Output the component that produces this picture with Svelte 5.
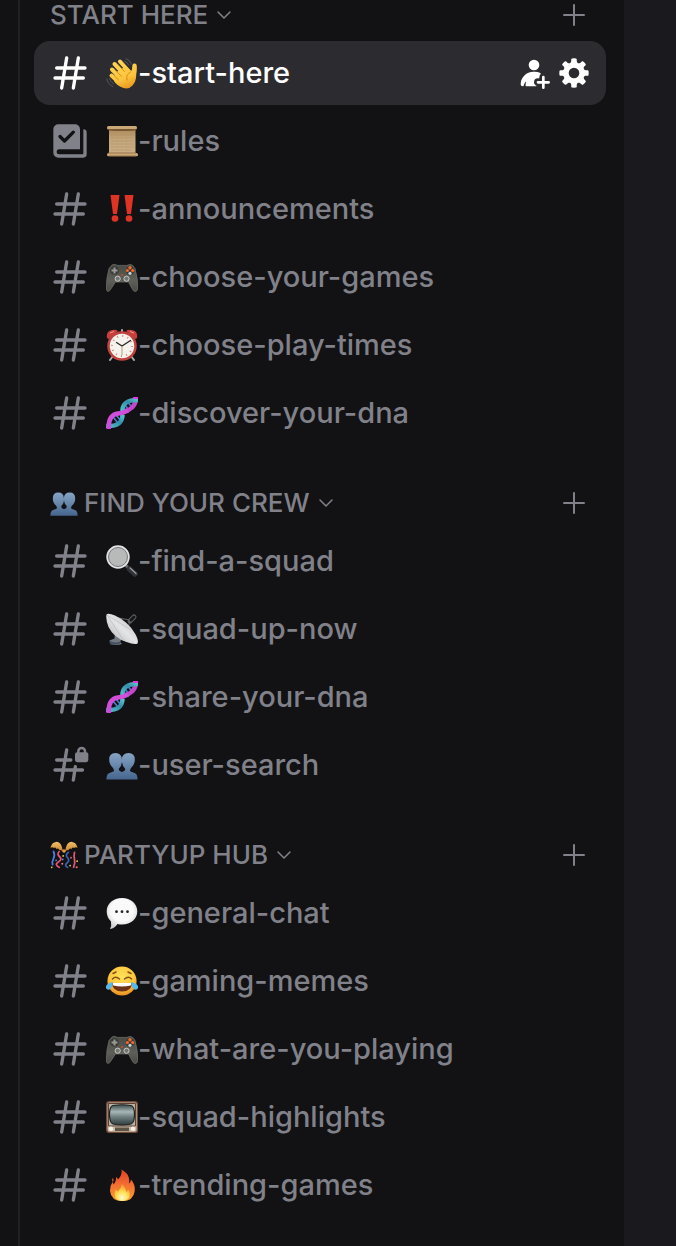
<script lang="ts">
  type Kind = 'text' | 'rules' | 'locked'
  type Channel = { name: string; emoji: string; kind?: Kind }
  type Category = { name: string; emoji?: string; channels: Channel[] }

  const categories: Category[] = [
    {
      name: 'START HERE',
      channels: [
        { name: 'start-here', emoji: 'wave' },
        { name: 'rules', emoji: 'scroll', kind: 'rules' },
        { name: 'announcements', emoji: 'bangbang' },
        { name: 'choose-your-games', emoji: 'gamepad' },
        { name: 'choose-play-times', emoji: 'clock' },
        { name: 'discover-your-dna', emoji: 'dna' },
      ],
    },
    {
      name: 'FIND YOUR CREW',
      emoji: 'busts',
      channels: [
        { name: 'find-a-squad', emoji: 'magnifier' },
        { name: 'squad-up-now', emoji: 'satellite' },
        { name: 'share-your-dna', emoji: 'dna' },
        { name: 'user-search', emoji: 'busts', kind: 'locked' },
      ],
    },
    {
      name: 'PARTYUP HUB',
      emoji: 'confetti',
      channels: [
        { name: 'general-chat', emoji: 'speech' },
        { name: 'gaming-memes', emoji: 'joy' },
        { name: 'what-are-you-playing', emoji: 'gamepad' },
        { name: 'squad-highlights', emoji: 'tv' },
        { name: 'trending-games', emoji: 'fire' },
      ],
    },
  ]

  let selected = $state('start-here')
  let collapsed = $state<Record<string, boolean>>({})
</script>

{#snippet emojiIcon(name: string)}
  <svg class="emoji" viewBox="0 0 32 32" role="img" aria-label={name}>
    {#if name === 'wave'}
      <g fill="none" stroke="#55555a" stroke-width="1" stroke-linecap="round">
        <path d="M20 1.500q4 1.500 5.500 5.500M18.500 4q3 1.200 4.200 4M.8 22q.8 5 5.700 7.500M3.500 21.500q.7 3.500 4 5.300" />
      </g>
      <g fill="none" stroke="url(#skin)" stroke-linecap="round">
        <path d="M6 12.500l10 10M8.500 7l11 11.500M14 4.500l9 10M5.500 18.500l8 7.500" stroke-width="4" />
      </g>
      <path fill="url(#skin)" d="M9 16L20 9l5 5q1.300-1 1.200-4 0-3.200 2-3.500 2.600-.2 2.600 3 .2 4-.5 7.500-.2 8-3.800 11.500-3.500 4-9 2.500Q11 29 8 24z" />
      <path fill="none" stroke="#c98316" stroke-width=".8" stroke-linecap="round" d="M9 12.800l6.500 6.500M12 7.500l6.500 7M8.500 19l4 3.800M24.500 15q-5 2.500-3.500 8" />
    {:else if name === 'scroll'}
      <path fill="url(#paper)" d="M3 3h26.500v26H3z" />
      <path stroke="#a58a60" stroke-width=".5" stroke-dasharray="3 .7 5 .6" d="M5 10h23M5 13h23M5 16h23M5 19h23M5 22h23M5 25h20" />
      <rect x="1" y="1" width="30" height="3.500" rx="1.500" fill="#cba878" />
      <path fill="#765834" d="M2 4h28v1.500q-14 1-27 0z" />
      <rect x="1" y="28" width="31" height="3.200" rx="1.500" fill="#cba878" />
      <path stroke="#8b683d" stroke-width=".8" d="M2 28h28M3 31h27" />
    {:else if name === 'bangbang'}
      <g fill="#df3423">
        <path d="M4.500 2h9l-2.500 19H7zM18.500 2h9L25 21h-4z" />
        <circle cx="9" cy="25.500" r="3.300" />
        <circle cx="23" cy="25.500" r="3.300" />
      </g>
    {:else if name === 'gamepad'}
      <path fill="url(#pad)" stroke="#74746c" stroke-width=".7" d="M6 4q3-1.500 5 .4h10Q24 2.500 26.800 4.500l2.200 3q3 11 2.700 19.500-.3 3.700-2.700 3.500-1.500 0-3-3l-3.500-6.500h-13L5.500 27q-2 3.500-3.500 3.500Q.3 30.300.3 27 .3 17 3 7.500z" />
      <circle cx="8.500" cy="9.500" r="4.300" fill="#393936" />
      <path stroke="#9b9b94" stroke-width="2" d="M8.500 6.500v6M5.500 9.500h6" />
      <circle cx="24" cy="9.500" r="4.300" fill="#393936" />
      <g fill="#f26a2b"><circle cx="24" cy="6.800" r="1.700" /><circle cx="21.400" cy="9.500" r="1.600" /><circle cx="26.700" cy="9.500" r="1.600" /></g>
      <circle cx="24" cy="12.300" r="1.600" fill="#c9d2d6" />
      <circle cx="16" cy="14" r="1.100" fill="#cc5120" />
      <g fill="#747672" stroke="#c5c9c8" stroke-width="1"><circle cx="11.700" cy="17.700" r="2.600" /><circle cx="20.500" cy="17.700" r="2.600" /></g>
    {:else if name === 'clock'}
      <path stroke="#aaa" stroke-width="2" stroke-linecap="round" d="M7 27l-3 4M25 27l3 4M16 3V1" />
      <path fill="#c93e3c" d="M1 9Q0 3 4.500 1.500 9-.3 12 2L2.500 10zM31 9q1-6-3.500-7.500Q23-.3 20 2l9.500 8z" />
      <path stroke="#ee9b94" d="M4 4l4-1.500M28 4l-4-1.500" />
      <circle cx="16" cy="17" r="13.500" fill="#f5f3ee" stroke="#c24441" stroke-width="2.500" />
      <circle cx="16" cy="17" r="10" fill="none" stroke="#d58277" stroke-width="2" stroke-dasharray="1 4.236" />
      <path fill="none" stroke="#282828" stroke-width="1.300" stroke-linecap="round" d="M10.500 13.500L16 17l8.500-5.500" />
      <path stroke="#bd9d71" d="M16 17v9" />
    {:else if name === 'dna'}
      <path fill="none" stroke="#4a7fd0" stroke-width="1.600" d="M19 8l4 5M22.500 6l4 5M7 20l5 6M10.500 18.500l4 5" />
      <path fill="none" stroke="#c247cd" stroke-width="4.500" d="M30 0q0 7-4 10.500-3 3-7 3.500" />
      <path fill="none" stroke="url(#helix)" stroke-width="4.500" d="M16.500 14Q16 3 31.800 3" />
      <path fill="none" stroke="url(#helix)" stroke-width="4.500" d="M.2 29q16 1 16.300-11" />
      <path fill="none" stroke="#cf4fd9" stroke-width="4.500" d="M2.800 31.500Q2 18 12 16.500q5-.3 10-3" />
      <path fill="none" stroke="#e03ae6" stroke-width="2" d="M27 1h5M1 31h4" />
    {:else if name === 'busts'}
      <path fill="url(#bust)" d="M.5 30.500q-.3-5 3-6.500l4-1.500q1-1.500-.5-3.500-3.800-3-3.800-8.500Q3.200 4 9.500 4t6.300 6.500Q16.200 4 22.500 4t6.300 6.500q0 5.500-3.800 8.500-1.500 2-.5 3.500l4 1.500q3.300 1.500 3 6.500z" />
      <path fill="#121214" d="M16 11.500q.2 5-3 8-.5 1.200.5 2.200 1.200 1 2.500 1.300 1.300-.3 2.500-1.300 1-1 .5-2.200-3.200-3-3-8z" />
    {:else if name === 'magnifier'}
      <path stroke="#68696c" stroke-width="3" d="M19.500 20l4 4" />
      <path stroke="#303136" stroke-width="5.500" stroke-linecap="round" d="M23.500 24l5.500 5" />
      <path stroke="#9c9ea2" stroke-width="1.200" stroke-linecap="round" d="M24 23l6 5.500" />
      <circle cx="12" cy="12" r="10.700" fill="#b8b9b9" stroke="#e1e2e3" stroke-width="2" />
      <circle cx="12" cy="12" r="9.500" fill="none" stroke="#777a7d" stroke-width="1" />
    {:else if name === 'satellite'}
      <path fill="#737980" d="M9 17l8 6-3 6 2 2q-6 2-12 0l-.5-3.500 5-2z" />
      <path fill="#414f62" d="M4 28q6 3 11 0v2q-5 3-11 1z" />
      <path stroke="#777" stroke-width=".8" d="M7 4l17 3-4 18" fill="none" />
      <path fill="url(#dish)" d="M.5 1.500Q2-.5 9 2.500q13 6 20 18 4 7 2.500 10-3 1.500-11-1.500Q8 25 2.500 14-.5 6 .5 1.500z" />
      <path fill="none" stroke="#b3b5b8" stroke-width=".6" d="M1 2l24 15M1 2l17 26" />
      <path stroke="#5c5e62" stroke-width="5" stroke-linecap="round" d="M24 8l4-4" />
      <path stroke="#17181b" stroke-width="3" stroke-linecap="round" d="M25 7l3-3" />
    {:else if name === 'confetti'}
      <g fill="none" stroke-width="2" stroke-linecap="round">
        <path stroke="#4a7fe0" d="M4 12q2 4 0 8t-1 7" />
        <path stroke="#e75772" d="M10.500 12q-3 3 .5 6t-1.500 6 1 6M28 13q-1 4 0 8t-1 9" />
        <path stroke="#3964b0" d="M21 13q-4 3-1 6t-.5 6 .5 5" />
      </g>
      <g fill="#e9ce51"><circle cx="15" cy="17" r="1" /><circle cx="31" cy="23" r="1" /><circle cx="2" cy="30" r="1" /><circle cx="23" cy="28" r="1" /></g>
      <g fill="#ef7181"><circle cx="14" cy="26" r="1.200" /><circle cx="30.500" cy="30" r="1.200" /><circle cx="24" cy="19" r="1" /></g>
      <g fill="#5b8fe8"><circle cx="7" cy="22" r="1" /><circle cx="14.500" cy="21" r="1" /></g>
      <path fill="url(#popper)" d="M15 12.500Q13 0 7 1 2 1 .5 8q2-1.500 4 0 1.500-1.500 3 1 2-1.500 3.500 1.500 2-.5 4 2zM17 12.500Q19 0 25 1q5 0 6.500 7-2-1.500-4 0-1.500-1.500-3 1-2-1.500-3.500 1.500-2-.5-4 2z" />
      <circle cx="16" cy="11.500" r="2" fill="#df9d43" />
    {:else if name === 'speech'}
      <path fill="url(#bubble)" d="M16 1c8.700 0 15.300 5.600 15.300 13.300S25 27.500 16 27.500q-2.500 0-4.500-.5-3 4.500-7.500 5 1.800-3 1-7.500Q.7 20.500.7 14.300C.7 6.600 7.300 1 16 1z" />
      <g fill="#27272a"><circle cx="10.500" cy="14.700" r="1.400" /><circle cx="16" cy="14.700" r="1.400" /><circle cx="21.500" cy="14.700" r="1.400" /></g>
    {:else if name === 'joy'}
      <circle cx="16" cy="16" r="14.600" fill="url(#face)" />
      <path fill="none" stroke="#86501a" stroke-width="1.500" stroke-linecap="round" d="M6.500 14q3-3.500 7 0M18.500 14q4-3.500 7 0M7 8.500l3-1.500M25 8.500L22 7" />
      <path fill="#6b3219" d="M6 18h20q-.5 8.500-10 8.500T6 18z" />
      <path fill="#fff" d="M6.500 18h19l-.8 2.500q-8.700 1.800-17.400 0z" />
      <path fill="#54b9ee" d="M6.500 16.500q.5 4-1.800 7-2 2.300-4 .5-2-2.500 1-5 2.500-1 4.800-2.500zM25.500 16.500q-.5 4 1.800 7 2 2.300 4 .5 2-2.500-1-5-2.500-1-4.800-2.500z" />
    {:else if name === 'tv'}
      <rect x=".8" y=".8" width="30.600" height="30.600" rx="2.500" fill="#c9bca8" stroke="#744a3b" stroke-width="1.500" />
      <path fill="#b9b3a4" stroke="#604137" stroke-width="1" d="M2.500 2.500h27v22.500h-27z" />
      <path fill="url(#screen)" stroke="#1c2222" stroke-width="1.200" d="M7 4.500q9-1.500 18 0 3.500 1 3.500 9t-3.500 9.500q-9 2-18 0-3.500-1.500-3.500-9.500t3.500-9z" />
      <path fill="#5c5345" d="M9 26.500h14v3.500H9z" />
      <circle cx="5" cy="27.700" r="2.200" fill="#f3efe6" />
      <circle cx="27" cy="27.700" r="2.200" fill="#f3efe6" />
    {:else if name === 'fire'}
      <path fill="url(#flame)" d="M15.500.5q6.500 3.500 7.500 9 .7 3-.2 5 2-1.200 2.200-4 4.500 5 3.700 11.500Q27.500 32 16.500 32 5 32 4 22q-.3-5 2.500-9 1 1 1 2.500 3-3.500 2.500-7.500 1.500.7 2 2.500Q16.500 6 15.500.500z" />
      <path fill="#e3542b" d="M6.500 9q2 1.500.3 4.500-1.500-2-.3-4.500z" />
      <path fill="url(#ember)" d="M16 15q4 4 4.500 8 1-.5 1.500-2.500 3 4 1.200 8Q21 32 16.500 32q-5 0-7.300-3.500Q7.500 24.500 10 20q.7 2 2 2.500Q15 19 16 15z" />
    {/if}
  </svg>
{/snippet}

{#snippet kindIcon(kind: Kind)}
  <svg class="kind" viewBox="0 0 24 24" aria-hidden="true">
    {#if kind === 'rules'}
      <path fill="currentColor" d="M15 2a3 3 0 0 1 3 3v12H5.500a1.500 1.500 0 0 0 0 3h14c.28 0 .5-.22.5-.5V5a2 2 0 0 1 2 2v13a2 2 0 0 1-2 2H5a3 3 0 0 1-3-3V5a3 3 0 0 1 3-3h10Z" />
      <path class="tick" d="M6 9.300L8.700 12l5.300-5.300" />
    {:else if kind === 'locked'}
      <path class="line" d="M10 3L7 21M15.200 13L14 21M4 9h8.500M3 15h16.500" />
      <path class="shackle" d="M17 5V3.800a2 2 0 0 1 4 0V5" />
      <rect x="15" y="4.300" width="8" height="6" rx="1.300" fill="currentColor" />
    {:else}
      <path class="line" d="M10 3L7 21M17 3l-3 18M4 9h17M3 15h17" />
    {/if}
  </svg>
{/snippet}

<svg class="defs" width="0" height="0" aria-hidden="true">
  <defs>
    <linearGradient id="skin" gradientUnits="userSpaceOnUse" x1="8" y1="4" x2="20" y2="32">
      <stop offset="0" stop-color="#ffd65a" /><stop offset=".65" stop-color="#fdc43c" /><stop offset="1" stop-color="#e89a1f" />
    </linearGradient>
    <linearGradient id="paper" x1="0" y1="0" x2="0" y2="1">
      <stop offset="0" stop-color="#a98454" /><stop offset=".4" stop-color="#c4a67a" /><stop offset="1" stop-color="#cbae85" />
    </linearGradient>
    <linearGradient id="pad" x1="0" y1="0" x2="0" y2="1">
      <stop offset="0" stop-color="#4a4a45" /><stop offset=".6" stop-color="#5e5f59" /><stop offset="1" stop-color="#484a46" />
    </linearGradient>
    <linearGradient id="helix" x1="0" y1="1" x2="1" y2="0">
      <stop offset="0" stop-color="#4fc0c8" /><stop offset=".6" stop-color="#348eaa" /><stop offset="1" stop-color="#5bc5ca" />
    </linearGradient>
    <linearGradient id="bust" x1="0" y1="0" x2="0" y2="1">
      <stop offset="0" stop-color="#86a5c5" /><stop offset="1" stop-color="#46658e" />
    </linearGradient>
    <linearGradient id="dish" x1="1" y1="0" x2="0" y2="1">
      <stop offset="0" stop-color="#b3b5b8" /><stop offset=".5" stop-color="#e4e5e6" /><stop offset="1" stop-color="#a7a9ad" />
    </linearGradient>
    <linearGradient id="popper" x1="0" y1="0" x2="0" y2="1">
      <stop offset="0" stop-color="#f3c168" /><stop offset="1" stop-color="#c77e2e" />
    </linearGradient>
    <radialGradient id="bubble" cx=".5" cy=".4" r=".6">
      <stop offset=".6" stop-color="#fafafa" /><stop offset="1" stop-color="#cfcfd1" />
    </radialGradient>
    <radialGradient id="face" cx=".5" cy=".35" r=".65">
      <stop offset="0" stop-color="#ffe35c" /><stop offset=".65" stop-color="#fcc63a" /><stop offset="1" stop-color="#e88b20" />
    </radialGradient>
    <linearGradient id="screen" x1="0" y1="0" x2="0" y2="1">
      <stop offset="0" stop-color="#3e4b4c" /><stop offset=".35" stop-color="#a8b8b8" /><stop offset=".6" stop-color="#6f7f80" /><stop offset="1" stop-color="#303b3d" />
    </linearGradient>
    <linearGradient id="flame" x1="0" y1="0" x2="0" y2="1">
      <stop offset="0" stop-color="#dd4124" /><stop offset=".45" stop-color="#f26b31" /><stop offset="1" stop-color="#f9a12f" />
    </linearGradient>
    <radialGradient id="ember" cx=".5" cy=".8" r=".7">
      <stop offset="0" stop-color="#fffbd0" /><stop offset=".5" stop-color="#ffdf55" /><stop offset="1" stop-color="#fba02d" />
    </radialGradient>
  </defs>
</svg>

<div class="app">
  <div class="rail"></div>
  <nav aria-label="Channels">
    {#each categories as category}
      <section>
        <header>
          <button
            class="toggle"
            aria-expanded={!collapsed[category.name]}
            onclick={() => (collapsed[category.name] = !collapsed[category.name])}
          >
            {#if category.emoji}
              {@render emojiIcon(category.emoji)}
            {/if}
            <span>{category.name}</span>
            <svg class="chevron" class:closed={collapsed[category.name]} viewBox="0 0 16 16" aria-hidden="true">
              <path d="M2 5l6 6 6-6" />
            </svg>
          </button>
          <button class="add" aria-label="Create channel in {category.name}">
            <svg viewBox="0 0 24 24" aria-hidden="true">
              <path d="M12 2v20M2 12h20" />
            </svg>
          </button>
        </header>
        {#if !collapsed[category.name]}
          <ul>
            {#each category.channels as channel}
              <li class:selected={selected === channel.name}>
                <a
                  href="#{channel.name}"
                  aria-current={selected === channel.name ? 'page' : undefined}
                  onclick={() => (selected = channel.name)}
                >
                  {@render kindIcon(channel.kind ?? 'text')}
                  <span class="name">{@render emojiIcon(channel.emoji)}-{channel.name}</span>
                </a>
                {#if selected === channel.name}
                  <div class="actions">
                    <button aria-label="Create invite">
                      <svg viewBox="0 0 24 24" aria-hidden="true">
                        <path d="M19 14a1 1 0 0 1 1 1v3h3a1 1 0 0 1 0 2h-3v3a1 1 0 0 1-2 0v-3h-3a1 1 0 1 1 0-2h3v-3a1 1 0 0 1 1-1Z" />
                        <path d="M16.830 12.930c.26-.27.26-.75-.08-.92A9.500 9.500 0 0 0 12.470 11h-.94A9.530 9.530 0 0 0 2 20.530c0 .81.66 1.470 1.470 1.470h.22c.24 0 .44-.17.5-.4.29-1.120.84-2.170 1.320-2.910.14-.21.43-.1.4.15l-.26 2.610c-.02.3.2.55.5.55h7.640c.12 0 .17-.31.06-.36C12.820 21.140 12 20.220 12 19a3 3 0 0 1 3-3h.5a.5.5 0 0 0 .5-.5V15c0-.8.31-1.530.83-2.070ZM12 10a4 4 0 1 0 0-8 4 4 0 0 0 0 8Z" />
                      </svg>
                    </button>
                    <button aria-label="Edit channel">
                      <svg viewBox="0 0 24 24" aria-hidden="true">
                        <path fill-rule="evenodd" d="M10.560 1.100c-.46.05-.7.53-.64.98.18 1.160-.19 2.200-.98 2.530-.8.33-1.790-.15-2.490-1.100-.27-.36-.78-.52-1.140-.24-.77.59-1.450 1.270-2.040 2.040-.28.36-.12.87.24 1.140.96.7 1.430 1.700 1.100 2.490-.33.8-1.370 1.160-2.530.98-.45-.07-.93.18-.99.64a11.100 11.100 0 0 0 0 2.880c.06.46.54.7.99.64 1.160-.18 2.200.19 2.530.98.33.8-.14 1.790-1.100 2.490-.36.27-.52.78-.24 1.140.59.77 1.270 1.450 2.040 2.040.36.28.87.12 1.140-.24.7-.95 1.700-1.430 2.490-1.100.8.33 1.160 1.370.98 2.530-.07.45.18.93.64.99a11.100 11.100 0 0 0 2.880 0c.46-.06.7-.54.64-.99-.18-1.160.19-2.200.98-2.530.8-.33 1.790.14 2.490 1.100.27.36.78.52 1.140.24.77-.59 1.450-1.270 2.040-2.040.28-.36.12-.87-.24-1.140-.96-.7-1.430-1.700-1.100-2.490.33-.8 1.370-1.160 2.530-.98.45.07.93-.18.99-.64a11.100 11.100 0 0 0 0-2.880c-.06-.46-.54-.7-.99-.64-1.160.18-2.200-.19-2.530-.98-.33-.8.14-1.790 1.100-2.490.36-.27.52-.78.24-1.140a11.070 11.070 0 0 0-2.040-2.040c-.36-.28-.87-.12-1.140.24-.7.96-1.700 1.430-2.490 1.100-.8-.33-1.160-1.370-.98-2.530.07-.45-.18-.93-.64-.99a11.100 11.100 0 0 0-2.880 0ZM16 12a4 4 0 1 1-8 0 4 4 0 0 1 8 0Z" />
                      </svg>
                    </button>
                  </div>
                {/if}
              </li>
            {/each}
          </ul>
        {/if}
      </section>
    {/each}
  </nav>
  <main></main>
</div>

<style>
  :global(body) {
    margin: 0;
    background: #121214;
  }
  .defs {
    position: absolute;
  }
  .app {
    display: flex;
    min-height: 100vh;
    background: #121214;
    color: #81818a;
    font-family: Inter, 'Open Sans', sans-serif;
    font-weight: 500;
  }
  .rail {
    width: 18px;
    border-right: 2px solid #202024;
  }
  nav {
    flex: 1;
    display: flex;
    flex-direction: column;
    gap: 43px;
    padding: 0 18px 28px 14px;
  }
  main {
    width: 52px;
    background: #1a1a1e;
  }
  header {
    display: flex;
    align-items: center;
    justify-content: space-between;
    height: 30px;
    margin-bottom: 11px;
    padding: 0 20px 0 16px;
  }
  button {
    display: flex;
    align-items: center;
    padding: 0;
    border: none;
    background: none;
    color: inherit;
    font: inherit;
    cursor: pointer;
  }
  .toggle {
    font-size: 26px;
    line-height: 30px;
  }
  .toggle .emoji {
    width: 28px;
    height: 28px;
    margin-right: 6px;
  }
  .chevron {
    width: 16px;
    height: 16px;
    margin-left: 8px;
    fill: none;
    stroke: currentColor;
    stroke-width: 1.5;
    stroke-linecap: round;
    stroke-linejoin: round;
  }
  .closed {
    transform: rotate(-90deg);
  }
  .add svg {
    width: 24px;
    height: 24px;
    stroke: currentColor;
    stroke-width: 2;
    stroke-linecap: round;
  }
  ul {
    display: flex;
    flex-direction: column;
    gap: 4px;
    margin: 0;
    padding: 0;
    list-style: none;
  }
  li {
    display: flex;
    align-items: center;
    padding: 0 16px;
    border-radius: 16px;
  }
  .selected {
    background: #2c2c30;
    color: #fff;
  }
  a {
    flex: 1;
    display: flex;
    align-items: center;
    gap: 16px;
    height: 64px;
    color: inherit;
    text-decoration: none;
  }
  .kind {
    width: 40px;
    height: 40px;
  }
  .line {
    fill: none;
    stroke: currentColor;
    stroke-width: 2;
    stroke-linecap: round;
  }
  .shackle {
    fill: none;
    stroke: currentColor;
    stroke-width: 1.5;
  }
  .tick {
    fill: none;
    stroke: #121214;
    stroke-width: 2;
    stroke-linecap: round;
    stroke-linejoin: round;
  }
  .name {
    display: flex;
    align-items: center;
    font-size: 29px;
    line-height: 40px;
    white-space: nowrap;
  }
  .emoji {
    width: 32px;
    height: 32px;
  }
  .actions {
    display: flex;
    gap: 8px;
  }
  .actions svg {
    width: 32px;
    height: 32px;
    fill: currentColor;
  }
</style>
